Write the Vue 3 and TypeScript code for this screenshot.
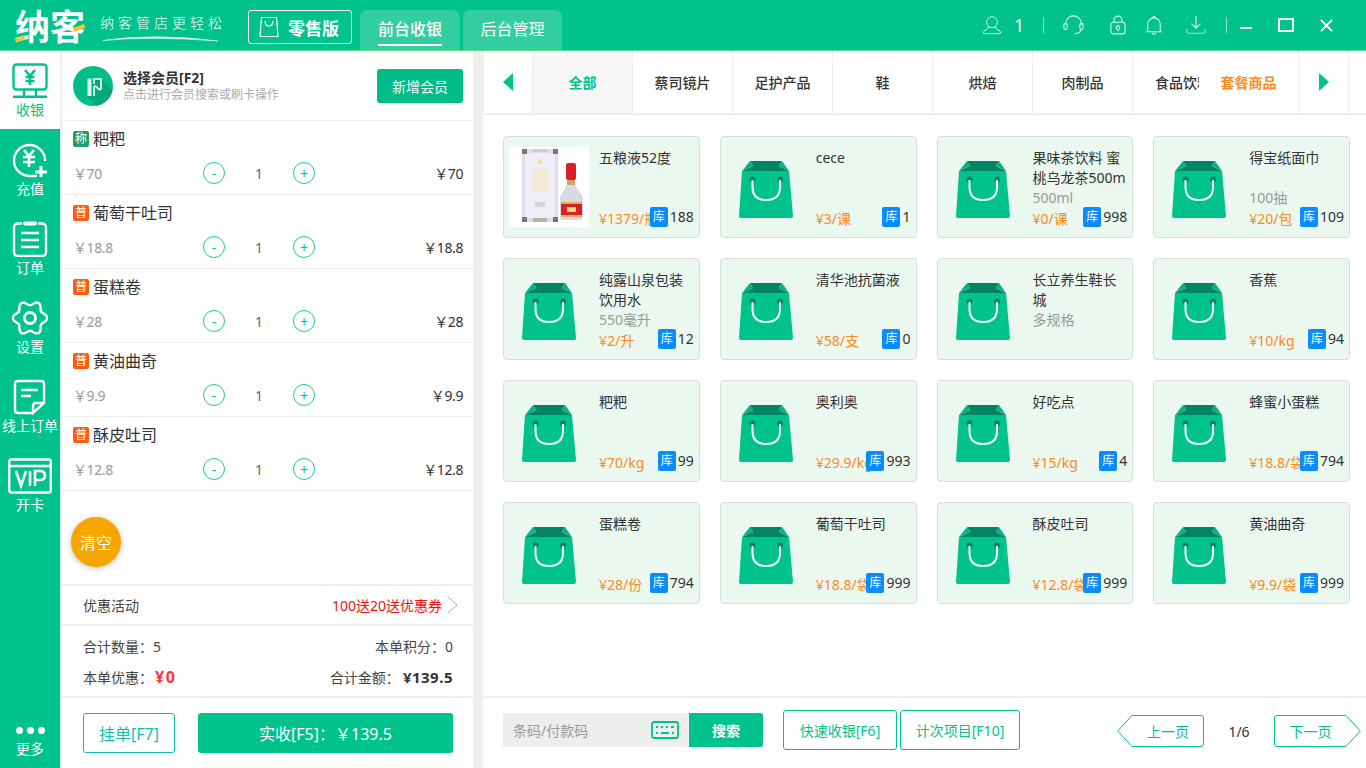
<script setup lang="ts">
interface CartItem { tag: string; kind: string; name: string; price: string }
interface Product { name: string; sub?: string; price: string; stock: string; photo?: boolean }

const cart: CartItem[] = [
  { tag: '称', kind: 'weigh', name: '粑粑', price: '70' },
  { tag: '普', kind: 'normal', name: '葡萄干吐司', price: '18.8' },
  { tag: '普', kind: 'normal', name: '蛋糕卷', price: '28' },
  { tag: '普', kind: 'normal', name: '黄油曲奇', price: '9.9' },
  { tag: '普', kind: 'normal', name: '酥皮吐司', price: '12.8' },
]
const tabs = ['全部', '蔡司镜片', '足护产品', '鞋', '烘焙', '肉制品']
const products: Product[] = [
  { name: '五粮液52度', price: '¥1379/瓶', stock: '188', photo: true },
  { name: 'cece', price: '¥3/课', stock: '1' },
  { name: '果味茶饮料 蜜桃乌龙茶500ml', sub: '500ml', price: '¥0/课', stock: '998' },
  { name: '得宝纸面巾', sub: '100抽', price: '¥20/包', stock: '109' },
  { name: '纯露山泉包装饮用水', sub: '550毫升', price: '¥2/升', stock: '12' },
  { name: '清华池抗菌液', price: '¥58/支', stock: '0' },
  { name: '长立养生鞋长城', sub: '多规格', price: '', stock: '' },
  { name: '香蕉', price: '¥10/kg', stock: '94' },
  { name: '粑粑', price: '¥70/kg', stock: '99' },
  { name: '奥利奥', price: '¥29.9/kg', stock: '993' },
  { name: '好吃点', price: '¥15/kg', stock: '4' },
  { name: '蜂蜜小蛋糕', price: '¥18.8/袋', stock: '794' },
  { name: '蛋糕卷', price: '¥28/份', stock: '794' },
  { name: '葡萄干吐司', price: '¥18.8/袋', stock: '999' },
  { name: '酥皮吐司', price: '¥12.8/袋', stock: '999' },
  { name: '黄油曲奇', price: '¥9.9/袋', stock: '999' },
]

const gearPath = (() => {
  const pts: string[] = []
  for (let i = 0; i < 120; i++) {
    const t = (i / 120) * Math.PI * 2
    const r = 15 + 2.2 * Math.cos(6 * t)
    pts.push(`${(18 + r * Math.cos(t)).toFixed(2)} ${(18 + r * Math.sin(t)).toFixed(2)}`)
  }
  return 'M' + pts.join('L') + 'Z'
})()
</script>

<template>
  <div class="app">
    <header class="top">
      <div class="logo">
        <span class="logo-mark">纳客</span>
        <i class="logo-dot a"></i><i class="logo-dot b"></i>
      </div>
      <div class="slogan">
        <span>纳客管店更轻松</span>
        <svg width="118" height="8" viewBox="0 0 118 8"><path d="M1 6.500 Q50 -1 116 7 Q50 2 1 6.500Z" fill="#fff" stroke="#fff" stroke-width=".5"/></svg>
      </div>
      <div class="edition">
        <svg width="20" height="22" viewBox="0 0 20 22" fill="none" stroke="#fff" stroke-width="1.2"><path d="M2.500 1.500H17.500L19 20.500H1Z"/><path d="M6 5Q6 10 10 10T14 5"/></svg>
        <span>零售版</span>
      </div>
      <nav class="main-tabs">
        <div class="main-tab on"><span>前台收银</span></div>
        <div class="main-tab"><span>后台管理</span></div>
      </nav>
      <div class="top-tools">
        <svg class="t-user" width="20" height="20" viewBox="0 0 22 22" fill="none" stroke="#d8f5ea" stroke-width="1.1"><circle cx="11" cy="8" r="6"/><path d="M7.500 12.500Q8 15 2 18Q1 20 2 20.500H20Q21 20 20 18Q14 15 14.500 12.500"/></svg>
        <span class="t-num">1</span>
        <i class="t-div"></i>
        <svg class="t-head" width="21" height="20" viewBox="0 0 23 22" fill="none" stroke="#d8f5ea" stroke-width="1.2"><path d="M3 11V9a8.500 8 0 0 1 17 0v2"/><rect x="1" y="9" width="3.500" height="7" rx="1.700"/><rect x="18.500" y="9" width="3.500" height="7" rx="1.700"/><path d="M20 16q-1 4-7 4.500"/></svg>
        <svg class="t-lock" width="16" height="20" viewBox="0 0 18 22" fill="none" stroke="#d8f5ea" stroke-width="1.2"><rect x="1" y="8" width="16" height="13" rx="3"/><path d="M4.500 8V5a4.500 4 0 0 1 9 0v3"/><circle cx="9" cy="14" r="2"/><path d="M9 16v2"/></svg>
        <svg class="t-bell" width="16" height="20" viewBox="0 0 18 22" fill="none" stroke="#d8f5ea" stroke-width="1.2"><path d="M2 17V10a7 7 0 0 1 14 0v7l1 1.500H1Z"/><path d="M7.500 3a1.500 1.500 0 0 1 3 0"/><path d="M7 19.500a2 2 0 0 0 4 0"/></svg>
        <svg class="t-down" width="20" height="20" viewBox="0 0 22 22" fill="none" stroke="#d8f5ea" stroke-width="1.2"><path d="M11 1V14M6 9.500L11 14.500L16 9.500"/><path d="M1 15V18Q1 20 3 20H19Q21 20 21 18V15" stroke="#9fe6cc"/></svg>
        <i class="t-div second"></i>
        <i class="w-min"></i>
        <i class="w-max"></i>
        <svg class="w-close" width="13" height="13" viewBox="0 0 14 14" stroke="#fff" stroke-width="2"><path d="M1 1L13 13M13 1L1 13"/></svg>
      </div>
    </header>

    <div class="body">
      <aside class="side">
        <div class="side-item active">
          <svg width="36" height="36" viewBox="0 0 36 36" fill="none" stroke="#00c28c" stroke-width="2.400"><rect x="1.500" y="1.500" width="33" height="25" rx="3"/><path d="M13 7L18 13L23 7M18 13V22M13.500 14H22.500M13.500 18H22.500" stroke-width="2.600"/><path d="M12 27V33M24 27V33"/><path d="M1 33.800H35"/></svg>
          <span>收银</span>
        </div>
        <div class="side-item">
          <svg width="36" height="36" viewBox="0 0 36 36" fill="none" stroke="#fff" stroke-width="2.400"><path d="M33 19A15.500 15.500 0 1 0 18 34H25"/><path d="M12 8L17 14L22 8M17 14V25M11 15H23M11 20H23" stroke-width="2.600"/><path d="M29 24V35M23 30H35" stroke-width="3"/></svg>
          <span>充值</span>
        </div>
        <div class="side-item">
          <svg width="36" height="36" viewBox="0 0 36 36" fill="none" stroke="#fff" stroke-width="2.400"><path d="M10 2.500H6Q2 2.500 2 6.500V31Q2 35 6 35H30Q34 35 34 31V6.500Q34 2.500 30 2.500H26"/><path d="M13 2.500H23" stroke-width="4" stroke-linecap="round"/><path d="M9 12H27M9 19H27M9 26H27"/></svg>
          <span>订单</span>
        </div>
        <div class="side-item">
          <svg width="36" height="36" viewBox="0 0 36 36" fill="none" stroke="#fff" stroke-width="2.400"><path :d="gearPath"/><circle cx="18" cy="18" r="5.500" stroke-width="2.800"/></svg>
          <span>设置</span>
        </div>
        <div class="side-item">
          <svg width="36" height="36" viewBox="0 0 36 36" fill="none" stroke="#fff" stroke-width="2.400"><path d="M21 34H6Q3 34 3 31V5Q3 2 6 2H29Q32 2 32 5V24L21 34V27Q21 24 24 24H32"/><path d="M9 11H26M9 17H19"/></svg>
          <span>线上订单</span>
        </div>
        <div class="side-item vip">
          <svg width="44" height="36" viewBox="0 0 44 36" fill="none" stroke="#fff" stroke-width="2.400"><rect x="1.200" y="1.500" width="41.600" height="33" rx="2"/><path d="M2 8H42"/><path d="M8 13L13 28L18 13M22 13V28M27 28V13H32Q37 13 37 17.500T32 22H27" stroke-width="2.600"/></svg>
          <span>开卡</span>
        </div>
        <div class="side-more">
          <div class="dots"><i></i><i></i><i></i></div>
          <span>更多</span>
        </div>
      </aside>

      <section class="left">
        <div class="member">
          <div class="avatar">
            <svg width="40" height="40" viewBox="0 0 40 40">
              <path d="M20 13L28 13L40 24V30L30 40H24L14 30Z" fill="#05a87a"/>
              <path d="M14.500 12.500H18.500V30H14.500Z" fill="#d8f4ea"/>
              <path d="M21 30V22Q21 19 23.500 21L25.500 23Q28 24.500 28 22V13H21V18" fill="none" stroke="#f0fbf7" stroke-width="1.700"/>
            </svg>
          </div>
          <div class="member-text">
            <b>选择会员[F2]</b>
            <small>点击进行会员搜索或刷卡操作</small>
          </div>
          <button class="new-member">新增会员</button>
        </div>

        <div v-for="it in cart" :key="it.name" class="cart-item">
          <div class="cart-name">
            <em :class="it.kind">{{ it.tag }}</em>
            <span>{{ it.name }}</span>
          </div>
          <div class="cart-line">
            <span class="unit">￥{{ it.price }}</span>
            <i class="circle minus">-</i>
            <span class="qty">1</span>
            <i class="circle plus">+</i>
            <span class="sum">￥{{ it.price }}</span>
          </div>
        </div>

        <button class="clear">清空</button>

        <div class="promo">
          <span>优惠活动</span>
          <span class="promo-r">100送20送优惠券
            <svg width="12" height="18" viewBox="0 0 12 18" fill="none" stroke="#aaa" stroke-width="1"><path d="M2 1L11 9L2 17"/></svg>
          </span>
        </div>
        <div class="totals">
          <div class="t-row"><span>合计数量：5</span><span>本单积分：0</span></div>
          <div class="t-row"><span>本单优惠：<b class="red">¥0</b></span><span>合计金额：<b class="dark">¥139.5</b></span></div>
        </div>
        <div class="actions">
          <button class="hold">挂单[F7]</button>
          <button class="pay">实收[F5]：￥139.5</button>
        </div>
      </section>

      <section class="right">
        <div class="cats">
          <div class="arrow-cell"><i class="tri left-tri"></i></div>
          <div v-for="(t, i) in tabs" :key="t" class="cat" :class="{ on: i === 0 }">{{ t }}</div>
          <div class="cat-clip"><span>食品饮料</span></div>
          <div class="cat combo">套餐商品</div>
          <div class="arrow-cell end"><i class="tri right-tri"></i></div>
        </div>

        <div class="grid">
          <div v-for="p in products" :key="p.name + p.price" class="card">
            <div class="pic">
              <svg v-if="p.photo" class="photo" width="80" height="80" viewBox="0 0 80 80">
                <rect width="80" height="80" fill="#fff"/>
                <rect x="13" y="2" width="36" height="73" rx="2" fill="#dfdbea"/>
                <rect x="16" y="6" width="30" height="65" fill="#efedf6"/>
                <rect x="13" y="2" width="5" height="5" fill="#77757e"/>
                <rect x="44" y="2" width="5" height="5" fill="#77757e"/>
                <rect x="13" y="70" width="5" height="5" fill="#77757e"/>
                <rect x="44" y="70" width="5" height="5" fill="#77757e"/>
                <rect x="24" y="2" width="14" height="3" fill="#cfcbd4"/>
                <rect x="24" y="71" width="14" height="4" fill="#b9b2a0"/>
                <rect x="22" y="22" width="18" height="22" fill="#f6e6d2" opacity=".8"/>
                <circle cx="31" cy="15" r="2.500" fill="#f0dfa0"/>
                <rect x="26" y="55" width="10" height="5" fill="#d5d5da"/>
                <rect x="57" y="16" width="10" height="17" rx="2" fill="#d81e26"/>
                <rect x="58" y="33" width="8" height="5" fill="#c9a860"/>
                <path d="M58 38H66L74 50V69Q74 73 70 73H55Q51 73 51 69V50Z" fill="#d9d9e2"/>
                <rect x="52" y="57" width="21" height="11" fill="#d81e26"/>
                <rect x="52" y="55" width="21" height="2" fill="#d9b35c"/>
                <rect x="52" y="68" width="21" height="2" fill="#d9b35c"/>
                <rect x="58" y="60" width="9" height="5" fill="#f3d98a"/>
              </svg>
              <svg v-else width="80" height="80" viewBox="0 0 80 80">
                <path d="M16 24H63L67 69Q67 71 65 71H15Q13 71 13 69Z" fill="#00c28c"/>
                <path d="M24 14H56L53 19L63 24H16L27 19Z" fill="#008462"/>
                <path d="M24 14L27 19L16 24Z" fill="#00b583"/>
                <path d="M56 14L53 19L63 24Z" fill="#00b583"/>
                <circle cx="26.500" cy="32.500" r="3" fill="#008462"/>
                <circle cx="54" cy="32.500" r="3" fill="#008462"/>
                <path d="M26.500 33V40Q26.500 53 40 53Q54 53 54 40V33" fill="none" stroke="#f5fffb" stroke-width="2"/>
              </svg>
            </div>
            <div class="info">
              <div class="p-name">{{ p.name }}</div>
              <div class="p-sub">{{ p.sub }}</div>
              <div class="p-price">{{ p.price }}</div>
            </div>
            <div v-if="p.stock" class="stock"><em>库</em><span>{{ p.stock }}</span></div>
          </div>
        </div>

        <div class="bottom">
          <div class="search">
            <span class="ph">条码/付款码</span>
            <svg width="28" height="18" viewBox="0 0 28 18" fill="none" stroke="#00c28c" stroke-width="1.800"><rect x="1" y="1" width="26" height="16" rx="2"/><path d="M5 6H7M10 6H12M15 6H17M20 6H23M5 12H7M10 12H18M21 12H23" stroke-width="2"/></svg>
            <button>搜索</button>
          </div>
          <button class="ghost first">快速收银[F6]</button>
          <button class="ghost second">计次项目[F10]</button>
          <div class="pager">
            <div class="page-btn prev">
              <svg width="87" height="32" viewBox="0 0 87 32" fill="none" stroke="#00c28c"><path d="M15 .5H84Q86.500 .5 86.500 3V29Q86.500 31.500 84 31.500H15L.7 16Z"/></svg>
              <span>上一页</span>
            </div>
            <span class="page-no">1/6</span>
            <div class="page-btn next">
              <svg width="87" height="32" viewBox="0 0 87 32" fill="none" stroke="#00c28c"><path d="M72 .5H3Q.5 .5 .5 3V29Q.5 31.500 3 31.500H72L86.300 16Z"/></svg>
              <span>下一页</span>
            </div>
          </div>
        </div>
      </section>
    </div>
  </div>
</template>

<style>
html, body { margin: 0; padding: 0; background: #eee; overflow: hidden; }
</style>

<style scoped>
.app {
  width: 1366px; height: 768px; display: flex; flex-direction: column; overflow: hidden;
  font-family: "Noto Sans", "Noto Sans CJK SC", sans-serif; color: #333; background: #eee;
}
button { font-family: inherit; border: 0; padding: 0; cursor: pointer; }
i, em { font-style: normal; }

.top { height: 50px; flex: none; display: flex; align-items: flex-start; background: #00c28c; color: #fff; border-bottom: 1px solid #5cdc8f; }
.logo { position: relative; width: 85px; margin-left: 15px; flex: none; }
.logo-mark { display: block; font-size: 35px; font-weight: 700; line-height: 38px; margin-top: 8px; white-space: nowrap; }
.logo-dot { position: absolute; background: #f7c430; height: 4px; transform: rotate(-20deg); }
.logo-dot.a { left: 0; top: 37px; width: 10px; }
.logo-dot.b { left: 58px; top: 26px; width: 12px; }
.slogan { width: 148px; flex: none; display: flex; flex-direction: column; margin-top: 13px; }
.slogan span { font-size: 14px; line-height: 20px; letter-spacing: 4px; white-space: nowrap; font-weight: 300; }
.slogan svg { margin: 1px 0 0 2px; }
.edition { width: 104px; height: 34px; flex: none; margin-top: 10px; box-sizing: border-box; border: 1px solid #fff; border-radius: 3px; display: flex; align-items: center; padding-left: 10px; gap: 9px; font-size: 17px; font-weight: 700; }
.main-tabs { display: flex; gap: 3px; margin-left: 8px; margin-top: 10px; }
.main-tab { width: 100px; height: 40px; border-radius: 7px 7px 0 0; background: #33ce9f; text-align: center; font-size: 16px; line-height: 38px; }
.main-tab + .main-tab { width: 99px; }
.main-tab.on span { display: inline-block; height: 34px; border-bottom: 2px solid #fff; font-weight: 500; line-height: 38px; }
.top-tools { margin-left: auto; display: flex; align-items: center; height: 50px; padding-right: 33px; }
.t-user { margin-right: 12px; }
.t-num { font-size: 18px; width: 8px; margin-right: 21px; line-height: 50px; }
.t-div { width: 1px; height: 16px; background: #8fe3c6; margin-right: 19px; }
.t-head { margin-right: 26px; }
.t-lock { margin-right: 20px; }
.t-bell { margin-right: 24px; }
.t-down { margin-right: 20px; }
.t-div.second { margin-right: 13px; }
.w-min { width: 12px; height: 2px; background: #fff; margin-right: 26px; margin-top: 6px; }
.w-max { width: 16px; height: 14px; box-sizing: border-box; border: 2px solid #f8fbe8; margin-right: 26px; }
.w-close { margin-top: 1px; }

.body { flex: 1; display: flex; min-height: 0; }
.side { width: 60px; flex: none; margin-right: 2px; background: #00c28c; color: #fff; display: flex; flex-direction: column; align-items: stretch; }
.side-item { height: 79px; padding-top: 12px; box-sizing: border-box; display: flex; flex-direction: column; align-items: center; }
.side-item span { font-size: 14px; line-height: 18px; margin-top: 2px; white-space: nowrap; }
.side-item.active { background: #fff; color: #00c28c; height: 78px; margin-bottom: 1px; }
.side-more { margin-top: auto; height: 31px; display: flex; flex-direction: column; align-items: center; font-size: 14px; line-height: 18px; padding-bottom: 10px; }
.dots { display: flex; gap: 4px; height: 7px; margin-bottom: 6px; }
.dots i { width: 7px; height: 7px; background: #fff; border-radius: 50%; }

.left { width: 411px; flex: none; background: #fff; display: flex; flex-direction: column; }
.member { height: 70px; flex: none; box-sizing: border-box; border-bottom: 1px solid #eee; display: flex; align-items: center; padding: 0 10px 0 11px; }
.avatar { width: 40px; height: 40px; border-radius: 50%; background: #00bd87; overflow: hidden; margin-right: 10px; }
.avatar svg { display: block; }
.member-text { flex: 1; display: flex; flex-direction: column; padding-top: 1px; }
.member-text b { font-size: 14px; line-height: 18px; font-weight: 700; color: #333; }
.member-text small { font-size: 12px; line-height: 16px; color: #aaa; }
.new-member { width: 86px; height: 34px; border-radius: 3px; background: #00bd87; color: #fff; font-size: 14px; }

.cart-item { height: 74px; flex: none; box-sizing: border-box; border-bottom: 1px solid #eee; padding: 8px 10px 0 11px; }
.cart-name { display: flex; align-items: center; gap: 4px; height: 20px; font-size: 16px; line-height: 20px; }
.cart-name em { width: 16px; height: 16px; border-radius: 2px; color: #fff; font-size: 12px; line-height: 16px; text-align: center; }
.weigh { background: #20a065; }
.normal { background: #ff5a12; }
.cart-line { display: flex; align-items: center; height: 24px; margin-top: 12px; font-size: 14px; }
.unit { width: 130px; color: #999; letter-spacing: -.4px; }
.circle { width: 22px; height: 22px; box-sizing: border-box; border: 1px solid #1ccb9b; border-radius: 50%; color: #00c28c; text-align: center; line-height: 21px; font-size: 14px; }
.qty { width: 68px; text-align: center; color: #666; }
.sum { margin-left: auto; color: #333; letter-spacing: -.4px; }

.clear { width: 50px; height: 50px; flex: none; margin: 26px 0 0 9px; border-radius: 50%; background: #f7a500; color: #fff; font-size: 16px; box-shadow: 0 1px 6px rgba(0, 0, 0, .25); }
.promo { margin-top: 17px; flex: none; box-sizing: border-box; border-top: 2px solid #eee; border-bottom: 2px solid #eee; display: flex; justify-content: space-between; align-items: center; padding: 0 15px 0 21px; font-size: 14px; height: 42px; color: #444; }
.promo-r { color: #f01010; display: flex; align-items: center; gap: 4px; font-size: 14px; }
.totals { flex: none; box-sizing: border-box; padding: 10px 20px 0 21px; border-bottom: 2px solid #eee; height: 72px; font-size: 14px; }
.t-row { display: flex; justify-content: space-between; height: 30px; line-height: 22px; color: #444; }
.red { color: #ff3333; font-size: 16px; letter-spacing: 1.5px; margin-left: 2px; }
.dark { color: #333; font-size: 15px; letter-spacing: .5px; margin-left: 3px; }
.actions { flex: 1; display: flex; align-items: flex-start; padding: 15px 20px 0 21px; gap: 23px; }
.hold { width: 92px; height: 40px; box-sizing: border-box; background: #fff; border: 1px solid #0fc0b0; border-radius: 3px; color: #0fc0b0; font-size: 16px; }
.pay { flex: 1; height: 40px; background: #00c28c; border-radius: 3px; color: #fff; font-size: 16px; }

.right { flex: 1; margin-left: 10px; background: #fff; display: flex; flex-direction: column; min-width: 0; }
.cats { height: 64px; flex: none; box-sizing: border-box; border-bottom: 2px solid #eee; border-left: 1px solid #eee; display: flex; padding-right: 17px; }
.arrow-cell { width: 49px; flex: none; box-sizing: border-box; display: flex; align-items: center; justify-content: center; border-right: 1px solid #eee; }
.arrow-cell.end { width: 50px; }
.tri { width: 0; height: 0; border-top: 9px solid transparent; border-bottom: 9px solid transparent; }
.left-tri { border-right: 10px solid #00c28c; margin-right: 1px; }
.right-tri { border-left: 10px solid #00c28c; margin-left: 1px; }
.cat { width: 100px; flex: none; box-sizing: border-box; border-right: 1px solid #eee; text-align: center; font-size: 14px; line-height: 64px; font-weight: 500; color: #333; height: 62px; }
.cat.on { background: #f7f7f7; color: #00c28c; font-weight: 700; }
.cat.combo { color: #fb8a1c; font-weight: 700; }
.cat-clip { width: 66px; flex: none; overflow: hidden; padding-left: 22px; box-sizing: border-box; white-space: nowrap; font-size: 14px; line-height: 64px; font-weight: 500; height: 62px; }

.grid { flex: 1; padding: 21px 16px 0 20px; display: grid; grid-template-columns: repeat(4, 1fr); grid-auto-rows: 102px; gap: 20px; align-content: start; }
.card { position: relative; box-sizing: border-box; background: #ebf8ef; border: 1px solid #d8dedb; border-radius: 4px; padding: 10px 5px; display: flex; gap: 10px; overflow: hidden; min-width: 0; }
.pic { width: 80px; height: 80px; flex: none; }
.pic svg { display: block; }
.photo { filter: blur(.4px); }
.info { width: 94px; flex: none; display: flex; flex-direction: column; font-size: 14px; line-height: 20px; margin-top: 1px; }
.p-name { height: 40px; flex: none; overflow: hidden; word-break: break-all; color: #333; }
.p-sub { height: 20px; flex: none; color: #999; }
.p-price { height: 20px; flex: none; color: #fb8a1c; white-space: nowrap; margin-top: 1px; }
.stock { position: absolute; right: 5px; bottom: 10px; display: flex; align-items: center; gap: 2px; font-size: 14px; line-height: 20px; color: #333; }
.stock em { width: 18px; height: 20px; background: #0a8cff; border-radius: 2px; color: #fff; font-size: 12px; text-align: center; }

.bottom { height: 72px; flex: none; box-sizing: border-box; border-top: 2px solid #eee; display: flex; align-items: flex-start; padding: 12px 5px 0 20px; }
.search { width: 260px; height: 34px; margin-top: 3px; background: #eee; display: flex; align-items: center; border-radius: 0 3px 3px 0; position: relative; }
.ph { flex: 1; padding-left: 10px; font-size: 14px; color: #999; }
.search svg { margin-right: 10px; }
.search button { width: 74px; height: 34px; background: #00c28c; color: #fff; font-size: 14px; font-weight: 700; border-radius: 0 3px 3px 0; }
.ghost { height: 40px; box-sizing: border-box; background: #fff; border: 1px solid #00c28c; border-radius: 3px; color: #00c28c; font-size: 14px; }
.ghost.first { width: 114px; margin-left: 20px; }
.ghost.second { width: 120px; margin-left: 3px; }
.pager { margin-left: auto; display: flex; align-items: center; margin-top: 5px; }
.page-btn { position: relative; width: 87px; height: 32px; font-size: 14px; color: #00c28c; text-align: center; line-height: 33px; }
.page-btn svg { position: absolute; left: 0; top: 0; }
.page-btn span { position: relative; }
.prev span { margin-left: 15px; }
.next span { margin-right: 14px; }
.page-no { width: 70px; text-align: center; font-size: 14px; color: #333; }
</style>
